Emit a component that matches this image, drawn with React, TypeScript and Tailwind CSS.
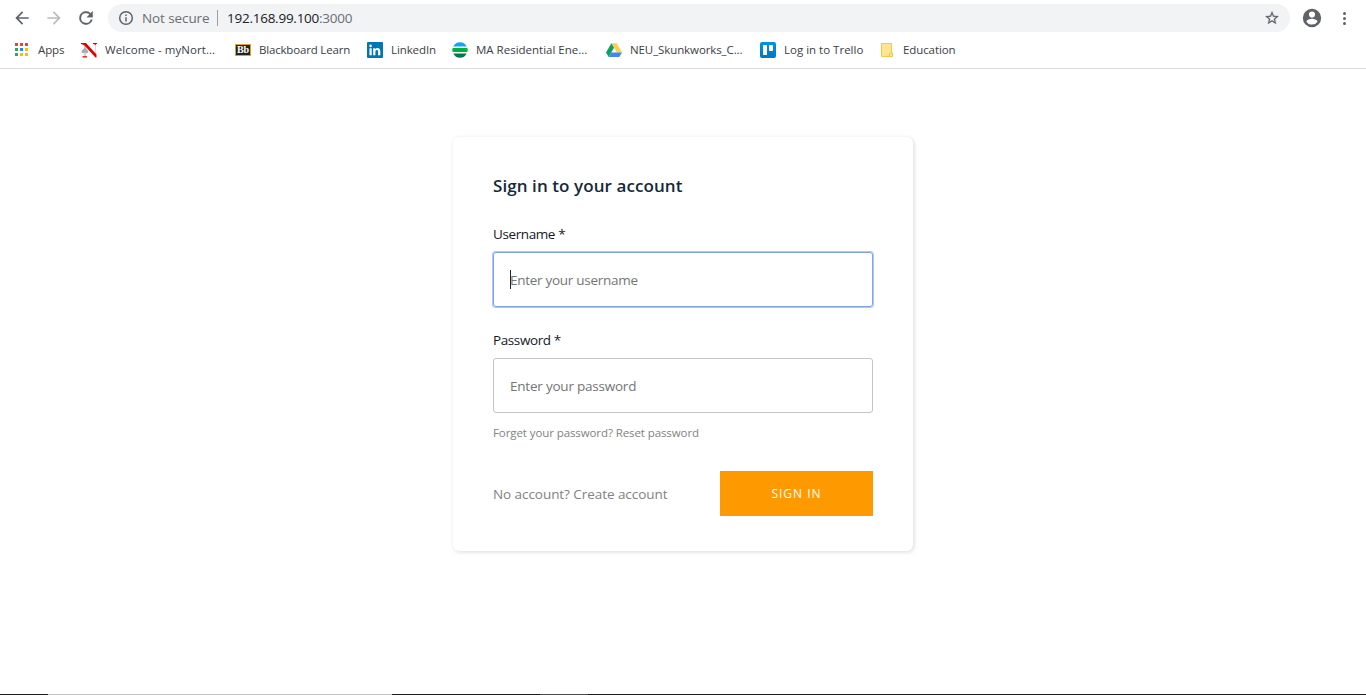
import type { ReactNode } from "react";

function Dots() {
  const colors = ["#ea4335", "#ea4335", "#ea4335", "#34a853", "#1a8cff", "#fbbc04", "#34a853", "#fbbc04", "#fbbc04"];
  return (
    <svg width="16" height="16" viewBox="0 0 16 16" shapeRendering="crispEdges">
      {colors.map((c, i) => (
        <rect key={i} x={1 + (i % 3) * 5} y={1 + Math.floor(i / 3) * 5} width="3" height="3" fill={c} />
      ))}
    </svg>
  );
}

function Northeastern() {
  return (
    <svg width="16" height="16" viewBox="0 0 16 16">
      <path d="M4 3v12" stroke="#b5b5b5" strokeWidth="1.2" />
      <path d="M4 5C3.400 6.800 .5 8 .5 9.800c0 1.500 2.300 1.700 3 .8h1C5.200 11.500 7.200 11.300 7.200 9.800 7.200 8 4.600 6.800 4 5Z" fill="#acacac" />
      <path d="M14.500 2v13" stroke="#f7c4c4" strokeWidth=".8" />
      <path d="M0 1h5L15.500 12.500v3h-1L3 3 0 2ZM12 1h4v1h-1.200v1h-1.200v-1H12ZM1.500 14.200h4.500v1.300H1.500Z" fill="#e00000" />
    </svg>
  );
}

function Blackboard() {
  return (
    <span className="flex h-3 w-4 items-center justify-center border border-[#d9a520] bg-[#222] font-['Liberation_Serif',serif] text-[10px] leading-none font-bold text-white">
      Bb
    </span>
  );
}

function LinkedIn() {
  return (
    <svg width="16" height="16" viewBox="0 0 16 16">
      <rect width="16" height="16" rx="1" fill="#0077b5" />
      <path d="M2.500 6.200h2.200v7H2.500ZM6.200 6.200h2.100v1c.5-.8 1.200-1.200 2.200-1.200 2.100 0 2.800 1.300 2.800 3.300v3.900h-2.200V9.700c0-1-.2-1.800-1.200-1.800-1.100 0-1.500.8-1.500 1.800v3.500H6.200Z" fill="#fff" />
      <circle cx="3.600" cy="3.900" r="1.300" fill="#fff" />
    </svg>
  );
}

function Globe() {
  return (
    <svg width="16" height="16" viewBox="0 0 16 16">
      <path d="M1.300 4.500a7.400 7.400 0 0 1 13.400 0Z" fill="#12a5f4" />
      <path d="M.6 6h14.800q.6 2 0 4H.6Q0 8 .6 6Z" fill="#00b140" />
      <path d="M1.300 11.500h13.400a7.400 7.400 0 0 1-13.400 0Z" fill="#007a4d" />
    </svg>
  );
}

function Drive() {
  return (
    <svg width="16" height="16" viewBox="0 0 16 16">
      <path d="M5.400 1.300h5.200L16 10.400h-5.200Z" fill="#ffcf48" />
      <path d="M5.400 1.300 8 5.800 2.700 14.900 0 10.400Z" fill="#11a15f" />
      <path d="M5.300 10.400H16l-2.700 4.500H2.700Z" fill="#4285f4" />
    </svg>
  );
}

function Trello() {
  return (
    <svg width="16" height="16" viewBox="0 0 16 16">
      <defs>
        <linearGradient id="trello" x2="0" y2="1">
          <stop stopColor="#0091e6" />
          <stop offset="1" stopColor="#0079bf" />
        </linearGradient>
      </defs>
      <rect width="16" height="16" rx="2" fill="url(#trello)" />
      <rect x="3" y="3" width="4" height="10" rx=".7" fill="#fff" />
      <rect x="9" y="3" width="4" height="6" rx=".7" fill="#fff" />
    </svg>
  );
}

function Folder() {
  return (
    <svg width="16" height="16" viewBox="0 0 16 16">
      <path d="M2.500 1.500h10v9.500h1v3.500h-11Z" fill="#ffe591" stroke="#ecc94f" />
      <path d="M10.500 14.500v-2.500q0-1.500 2-1.500" fill="none" stroke="#ecc94f" />
    </svg>
  );
}

const bookmarks: { label: string; icon: ReactNode; box: string; text: string }[] = [
  { label: "Apps", icon: <Dots />, box: "w-[67px]", text: "tracking-[-0.1px]" },
  { label: "Welcome - myNort...", icon: <Northeastern />, box: "w-[154px]", text: "tracking-[0.06px]" },
  { label: "Blackboard Learn", icon: <Blackboard />, box: "w-[132px]", text: "tracking-[-0.18px]" },
  { label: "LinkedIn", icon: <LinkedIn />, box: "w-[85px]", text: "tracking-[-0.1px]" },
  { label: "MA Residential Ene...", icon: <Globe />, box: "w-[154px]", text: "tracking-[0px]" },
  { label: "NEU_Skunkworks_C...", icon: <Drive />, box: "w-[154px]", text: "tracking-[-0.1px]" },
  { label: "Log in to Trello", icon: <Trello />, box: "w-[119px]", text: "tracking-[0px]" },
  { label: "Education", icon: <Folder />, box: "w-[100px]", text: "tracking-[-0.1px]" },
];

function Toolbar() {
  return (
    <div className="flex h-9 items-center pr-3 pl-3">
      <svg width="20" height="20" viewBox="0 0 24 24" fill="#5f6368">
        <path d="M20 11H7.830l5.590-5.590L12 4l-8 8 8 8 1.410-1.410L7.830 13H20v-2z" />
      </svg>
      <svg className="ml-3" width="20" height="20" viewBox="0 0 24 24" fill="#babcbe">
        <path d="M12 4l-1.410 1.410L16.170 11H4v2h12.170l-5.580 5.590L12 20l8-8z" />
      </svg>
      <svg className="ml-3" width="20" height="20" viewBox="0 0 24 24" fill="#5f6368">
        <path d="M17.650 6.350A7.960 7.960 0 0 0 12 4a8 8 0 1 0 7.730 10h-2.080A6 6 0 1 1 12 6c1.660 0 3.140.690 4.220 1.780L13 11h7V4l-2.350 2.350z" stroke="#5f6368" strokeWidth=".4" />
      </svg>
      <div className="ml-3 flex h-7 w-[1182px] items-center rounded-full bg-[#f1f3f4] pr-2.5 pl-2.5 text-[13.500px]">
        <svg width="16" height="16" viewBox="0 0 16 16" fill="none" stroke="#5f6368" strokeWidth="1.500">
          <circle cx="8" cy="8" r="6.300" />
          <path d="M8 7.200v4.200M8 4.500V6" />
        </svg>
        <span className="ml-2 w-[75px] tracking-[-0.100px] text-[#6a6e73]">Not secure</span>
        <span className="h-4 w-px bg-[#9aa0a6]" />
        <span className="ml-[9px] tracking-[-0.250px] text-[#202124]">
          192.168.99.100<span className="text-[#6a6e73]">:3000</span>
        </span>
        <svg className="ml-auto" width="16" height="16" viewBox="0 0 24 24" fill="#5f6368">
          <path d="M22 9.240l-7.190-.620L12 2 9.190 8.630 2 9.240l5.460 4.730L5.820 21 12 17.270 18.180 21l-1.630-7.030L22 9.240zM12 15.400l-3.760 2.270 1-4.280-3.320-2.880 4.380-.380L12 6.100l1.710 4.040 4.380.380-3.320 2.880 1 4.280L12 15.400z" stroke="#5f6368" strokeWidth=".4" />
        </svg>
      </div>
      <svg className="ml-[11px]" width="22" height="22" viewBox="0 0 24 24" fill="#5f6368">
        <path d="M12 2a10 10 0 1 0 0 20 10 10 0 0 0 0-20zm0 3a3.300 3.300 0 1 1 0 6.600A3.300 3.300 0 0 1 12 5zm0 14.200a7.200 7.200 0 0 1-6-3.220c.030-1.990 4-3.080 6-3.080s5.970 1.090 6 3.080a7.200 7.200 0 0 1-6 3.220z" />
      </svg>
      <svg className="ml-[14px]" width="16" height="16" viewBox="0 0 16 16" fill="#5f6368">
        <circle cx="7.500" cy="3.500" r="1.500" />
        <circle cx="7.500" cy="8.500" r="1.500" />
        <circle cx="7.500" cy="13.500" r="1.500" />
      </svg>
    </div>
  );
}

function Field({ id, label, placeholder, focused }: { id: string; label: string; placeholder: string; focused?: boolean }) {
  return (
    <div>
      <label htmlFor={id} className="block h-[21px] text-[13.500px] leading-[21px] tracking-[-0.400px] text-[#16191f]">
        {label}
      </label>
      <div className="relative mt-[7px]">
        <input
          id={id}
          placeholder={placeholder}
          className={
            "block h-[55px] w-full rounded-[3px] border px-4 pt-[1px] text-[13.500px] outline-none placeholder:text-[#757575] " +
            (focused
              ? "border-[#83a4e4] tracking-[-0.280px] ring-1 ring-[#a8c7fa]"
              : "border-[#c4c4c4] tracking-[-0.220px]")
          }
        />
        {focused && <span className="absolute top-[18px] left-[17px] h-[19px] w-px bg-[#152939]" />}
      </div>
    </div>
  );
}

export default function App() {
  return (
    <div className="flex h-[695px] flex-col overflow-hidden bg-white font-['Open_Sans','Noto_Sans',sans-serif]">
      <header className="h-[69px] border-b border-[#dadce0]">
        <Toolbar />
        <nav className="flex h-7 items-center pl-[14px] text-[11.500px] text-[#3c4043]">
          {bookmarks.map((b) => (
            <a key={b.label} className={"flex items-center gap-2 whitespace-nowrap " + b.box}>
              <span className="flex w-4 shrink-0 justify-center">{b.icon}</span>
              <span className={b.text}>{b.label}</span>
            </a>
          ))}
        </nav>
      </header>
      <main className="flex flex-1 items-start justify-center pt-[68px]">
        <form className="h-[414px] w-[460px] rounded-md bg-white px-10 pt-[35px] shadow-[1px_1px_4px_0_rgba(0,0,0,0.15)]">
          <h1 className="mb-[25px] h-[27px] text-[17px] leading-[27px] font-semibold tracking-[0.080px] text-[#152939]">
            Sign in to your account
          </h1>
          <Field id="username" label="Username *" placeholder="Enter your username" focused />
          <div className="h-[23px]" />
          <Field id="password" label="Password *" placeholder="Enter your password" />
          <p className="mt-[11px] h-[18px] text-[11.500px] leading-[18px] tracking-[-0.090px] whitespace-nowrap text-[#828282]">
            Forget your password? <a>Reset password</a>
          </p>
          <div className="mt-[29px] flex items-center justify-between">
            <span className="pt-0.5 text-[13.500px] tracking-[-0.060px] whitespace-nowrap text-[#828282]">
              No account? <a>Create account</a>
            </span>
            <button type="button" className="h-[45px] w-[153px] bg-[#ff9900] text-[12px] tracking-[1px] text-white">
              SIGN IN
            </button>
          </div>
        </form>
      </main>
      <footer className="flex h-px bg-[#1c1c1c]">
        <span className="ml-12 w-[344px] bg-[#c2c2c2]" />
        <span className="ml-[148px] w-12 bg-[#4a4a4a]" />
      </footer>
    </div>
  );
}
